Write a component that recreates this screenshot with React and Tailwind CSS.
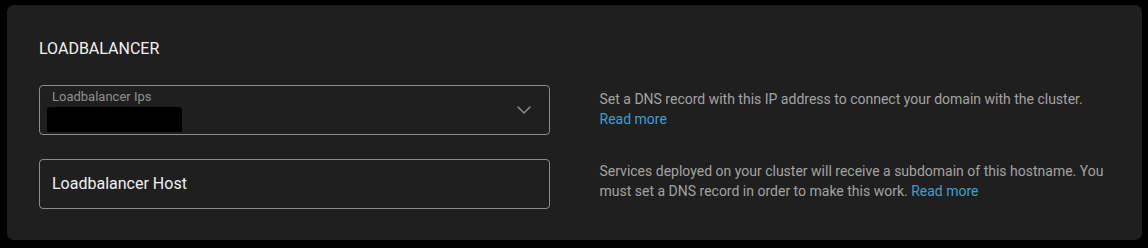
import { ChevronDown } from 'lucide-react';

function Field({ children, right }) {
  return (
    <div className="grid grid-cols-2 gap-[50px]">
      {children}
      {right}
    </div>
  );
}

export default function App() {
  return (
    <div className="min-h-[248px] bg-black pt-[5px] pb-[8px] pl-[7px] pr-[6px] font-['Roboto',sans-serif]">
      <div className="rounded-[7px] bg-[#1f1f1f] px-[32px] pt-[32px] pb-[31px]">
        <h2 className="text-[16px] leading-[24px] text-[#f2f2f2]">LOADBALANCER</h2>

        <div className="mt-[24px] flex flex-col gap-[24px]">
          <Field
            right={
              <p className="mt-[4px] text-[14px] leading-[20px] text-[#a3a3a3]">
                Set a DNS record with this IP address to connect your domain with the cluster.{' '}
                <a className="text-[#3d9fd3]">Read more</a>
              </p>
            }
          >
            <div className="flex h-[50px] items-center rounded-[4px] border border-[#8c8c8c] pl-[12px] pr-[13px]">
              <div className="flex-1">
                <div className="text-[13px] leading-[15px] text-[#8f8f8f]">Loadbalancer Ips</div>
                <div className="-ml-[5px] mt-[3px] h-[25px] w-[135px] rounded-t-[3px] bg-black" />
              </div>
              <ChevronDown size={24} strokeWidth={1.5} className="text-[#8a8a8a]" />
            </div>
          </Field>

          <Field
            right={
              <p className="mt-[2px] text-[14px] leading-[20px] text-[#a3a3a3]">
                Services deployed on your cluster will receive a subdomain of this hostname. You
                must set a DNS record in order to make this work.{' '}
                <a className="text-[#3d9fd3]">Read more</a>
              </p>
            }
          >
            <div className="flex h-[50px] items-center rounded-[4px] border border-[#8c8c8c] px-[12px]">
              <span className="text-[16px] text-[#f0f0f0]">Loadbalancer Host</span>
            </div>
          </Field>
        </div>
      </div>
    </div>
  );
}
